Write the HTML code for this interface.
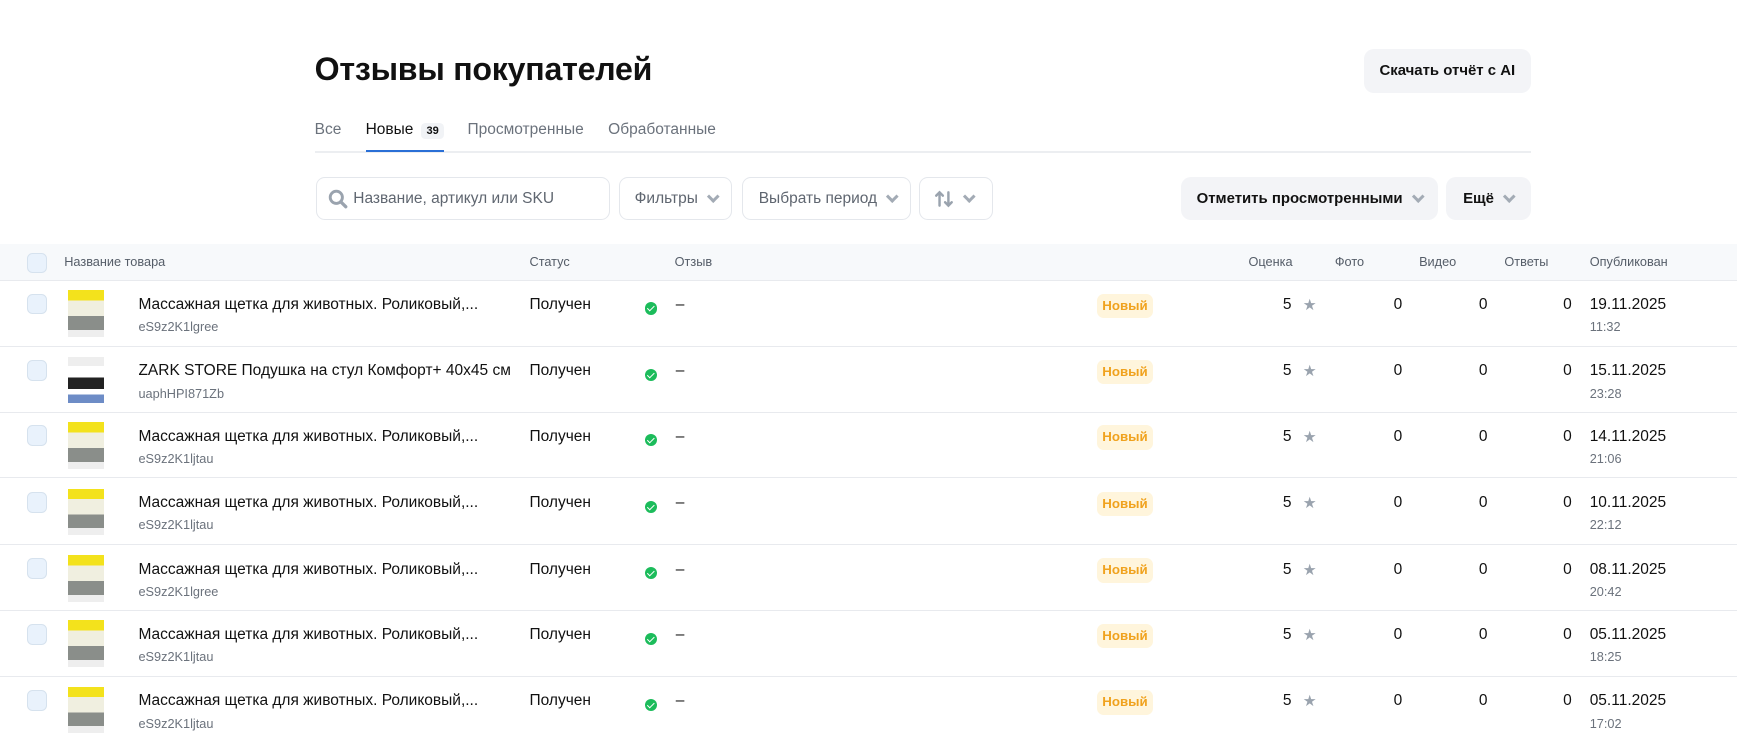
<!DOCTYPE html>
<html><head><meta charset="utf-8"><style>
html,body{margin:0;padding:0;background:#fff;overflow:hidden}
#w{zoom:1.1078;width:1568px;height:666px;position:relative;font-family:"Liberation Sans",sans-serif;color:#111}
.a{position:absolute;white-space:nowrap}
h1{position:absolute;left:284px;top:46px;margin:0;font-size:29px;font-weight:bold;letter-spacing:-0.2px}
.btn{position:absolute;background:#f3f4f7;border-radius:9px;font-size:13.5px;font-weight:bold;display:flex;align-items:center;justify-content:center}
.ob{position:absolute;border:1px solid #e4e7ec;border-radius:8px;font-size:14px;color:#5f6670;display:flex;align-items:center;box-sizing:border-box}
.chev{display:inline-block;width:5px;height:5px;border-right:3px solid #a3abb5;border-bottom:3px solid #a3abb5;transform:rotate(45deg);margin-left:10px;margin-top:-4px}
.tab{position:absolute;top:109px;font-size:14px;color:#6b727c}
.hd{position:absolute;top:220px;left:0;width:1568px;height:33px;background:#f7f9fb;border-bottom:1px solid #e8eaee}
.hd span{position:absolute;top:9px;font-size:11.5px;color:#555d68}
.cb{position:absolute;width:17px;height:17px;border:1px solid #d6e2ee;background:#e9f2fc;border-radius:5px}
.row{position:absolute;left:0;width:1568px;height:59px;border-bottom:1px solid #e8eaee}
.row .t{position:absolute;font-size:14px;top:14px}
.row .s{position:absolute;font-size:11.5px;color:#6b727c;top:35px;left:125px}
.img{position:absolute;left:61px;top:9px;width:33px;height:42px;background:linear-gradient(180deg,#f3e21c 0 22%,#f0efe0 22% 55%,#8a8e8a 55% 85%,#eee 85%);}
.img2{position:absolute;left:61px;top:9px;width:33px;height:42px;background:linear-gradient(180deg,#eee 0 20%,#fff 20% 45%,#222 45% 70%,#fff 70% 82%,#6d8cc6 82%)}
.ok{position:absolute;left:582px;top:20px;width:11px;height:11px;border-radius:50%;background:#1cbc5b}
.ok:after{content:"";position:absolute;left:3.5px;top:1.8px;width:2.5px;height:5px;border-right:1.6px solid #fff;border-bottom:1.6px solid #fff;transform:rotate(45deg)}
.bd{position:absolute;left:990px;top:12px;width:51px;height:22px;background:#fff5dc;border-radius:6px;color:#f0a21e;font-size:12px;font-weight:bold;text-align:center;line-height:22px}
.st{position:absolute;left:1176px;top:14px;color:#9aa3ae;font-size:14px}
</style></head><body><div id="w">
<h1>Отзывы покупателей</h1>
<div class="btn" style="left:1231px;top:44px;width:151px;height:40px">Скачать отчёт с AI</div>
<div class="tab" style="left:284px">Все</div>
<div class="tab" style="left:330px;color:#111">Новые <span style="font-size:10px;font-weight:bold;background:#f1f3f6;border-radius:4px;padding:2px 5px;margin-left:3px">39</span></div>
<div class="tab" style="left:422px">Просмотренные</div>
<div class="tab" style="left:549px">Обработанные</div>
<div class="a" style="left:284px;top:136px;width:1098px;height:2px;background:#eceef1"></div>
<div class="a" style="left:330px;top:135px;width:71px;height:2px;background:#2a6fd6"></div>
<div class="ob" style="left:285px;top:160px;width:266px;height:39px;padding-left:10px"><svg width="18" height="18" viewBox="0 0 18 18"><circle cx="7.5" cy="7.5" r="5.5" fill="none" stroke="#9aa3ae" stroke-width="2.6"/><path d="M11.5 11.5L16 16" stroke="#9aa3ae" stroke-width="3" stroke-linecap="round"/></svg><span style="margin-left:5px">Название, артикул или SKU</span></div>
<div class="ob" style="left:559px;top:160px;width:102px;height:39px;padding-left:13px">Фильтры<i class="chev"></i></div>
<div class="ob" style="left:670px;top:160px;width:152px;height:39px;padding-left:14px">Выбрать период<i class="chev"></i></div>
<div class="ob" style="left:830px;top:160px;width:66px;height:39px;padding-left:12px"><svg width="18" height="18" viewBox="0 0 18 18" fill="none" stroke="#9aa3ae" stroke-width="2.2" stroke-linecap="round"><path d="M5 15V3M2 6l3-3 3 3M13 3v12M10 12l3 3 3-3"/></svg><i class="chev"></i></div>
<div class="btn" style="left:1066px;top:160px;width:232px;height:39px">Отметить просмотренными<i class="chev"></i></div>
<div class="btn" style="left:1305px;top:160px;width:77px;height:39px">Ещё<i class="chev"></i></div>
<div class="hd"><div class="cb" style="left:24px;top:8px"></div>
<span style="left:58px">Название товара</span><span style="left:478px">Статус</span><span style="left:609px">Отзыв</span>
<span style="left:1127px">Оценка</span><span style="left:1205px">Фото</span><span style="left:1281px">Видео</span><span style="left:1358px">Ответы</span><span style="left:1435px">Опубликован</span></div>
<div id="rows"></div>
<script>
var d=[["Массажная щетка для животных. Роликовый,...","eS9z2K1lgree","19.11.2025","11:32",0],["ZARK STORE Подушка на стул Комфорт+ 40x45 см","uaphHPI871Zb","15.11.2025","23:28",1],["Массажная щетка для животных. Роликовый,...","eS9z2K1ljtau","14.11.2025","21:06",0],["Массажная щетка для животных. Роликовый,...","eS9z2K1ljtau","10.11.2025","22:12",0],["Массажная щетка для животных. Роликовый,...","eS9z2K1lgree","08.11.2025","20:42",0],["Массажная щетка для животных. Роликовый,...","eS9z2K1ljtau","05.11.2025","18:25",0],["Массажная щетка для животных. Роликовый,...","eS9z2K1ljtau","05.11.2025","17:02",0]];
var tops=[253,313,372,432,492,551,611],h="";
d.forEach(function(r,i){h+='<div class="row" style="top:'+tops[i]+'px"><div class="cb" style="left:24px;top:12px"></div><div class="'+(r[4]?'img2':'img')+'"></div><div class="t" style="left:125px">'+r[0]+'</div><div class="s">'+r[1]+'</div><div class="t" style="left:478px">Получен</div><div class="ok"></div><div class="t" style="left:610px">–</div><div class="bd">Новый</div><div class="t" style="left:1158px">5</div><div class="st">★</div><div class="t" style="left:1258px">0</div><div class="t" style="left:1335px">0</div><div class="t" style="left:1411px">0</div><div class="t" style="left:1435px">'+r[2]+'</div><div class="s" style="left:1435px">'+r[3]+'</div></div>'});
document.getElementById("rows").innerHTML=h;
</script>
</div></body></html>
